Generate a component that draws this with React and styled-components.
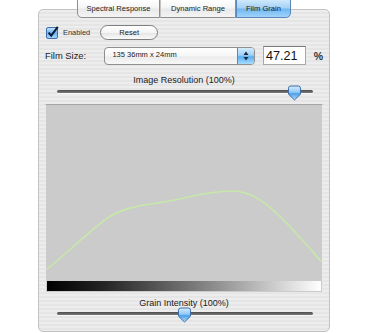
import React from "react";
import styled, { createGlobalStyle } from "styled-components";

const Global = createGlobalStyle`
  html, body { margin: 0; padding: 0; background: #ffffff; }
  body { font-family: "Liberation Sans", Arial, sans-serif; color: #1a1a1a; }
`;

const Page = styled.div`
  width: 370px;
  height: 333px;
  overflow: hidden;
  background: #ffffff;
  padding: 0 0 1px 38px;
  box-sizing: border-box;
  display: flex;
  flex-direction: column;
`;

const Window = styled.div`
  width: 292px;
  display: flex;
  flex-direction: column;
  flex: 1;
`;

const TabBar = styled.div`
  display: flex;
  justify-content: center;
  margin-top: -1px;
  margin-bottom: -9px;
  position: relative;
  z-index: 1;
`;

const Tab = styled.div`
  width: ${(p) => p.$w}px;
  height: 19px;
  box-sizing: border-box;
  display: flex;
  align-items: center;
  justify-content: center;
  font-size: 7.6px;
  color: #222;
  border: 1px solid #8e8e8e;
  border-left: ${(p) => (p.$first ? "1px solid #8e8e8e" : "1px solid #c4c4c4")};
  border-radius: ${(p) =>
    p.$first ? "0 0 0 5px" : p.$last ? "0 0 5px 0" : "0"};
  background: ${(p) =>
    p.$active
      ? "linear-gradient(#cfe8fb 0%, #a6d2f6 45%, #72b8f2 55%, #9fd3fb 100%)"
      : "linear-gradient(#ffffff 0%, #f5f5f5 45%, #e9e9e9 55%, #f4f4f4 100%)"};
  ${(p) => (p.$active ? "border-color: #5a86b8;" : "")}
`;

const Panel = styled.div`
  flex: 1;
  border: 1px solid #c2c2c2;
  border-radius: 5px;
  background: repeating-linear-gradient(
    to bottom,
    #ededed 0px,
    #ededed 2px,
    #e5e5e5 2px,
    #e5e5e5 4px
  );
  padding: 15px 6px 0 6px;
  display: flex;
  flex-direction: column;
`;

const Row = styled.div`
  display: flex;
  align-items: center;
  height: ${(p) => p.$h}px;
  margin-top: ${(p) => p.$mt || 0}px;
`;

const CheckWrap = styled.div`
  display: flex;
  align-items: center;
  gap: 4px;
  margin-left: 1px;
  font-size: 7.4px;
  color: #333;
`;

const ResetButton = styled.div`
  margin-left: 10px;
  width: 58px;
  height: 15px;
  box-sizing: border-box;
  border: 1px solid #7e7e7e;
  border-radius: 8px;
  background: linear-gradient(#ffffff 0%, #f4f4f4 50%, #e6e6e6 55%, #fafafa 100%);
  display: flex;
  align-items: center;
  justify-content: center;
  font-size: 7.6px;
  color: #222;
`;

const FieldLabel = styled.div`
  width: 60px;
  font-size: 9.4px;
  color: #222;
`;

const Select = styled.div`
  width: 152px;
  height: 18px;
  box-sizing: border-box;
  border: 1px solid #8f8f8f;
  border-radius: 4px;
  background: linear-gradient(#ffffff 0%, #f6f6f6 50%, #ebebeb 55%, #f8f8f8 100%);
  display: flex;
  align-items: stretch;
  overflow: hidden;
`;

const SelectText = styled.div`
  flex: 1;
  font-size: 7.5px;
  padding-left: 7px;
  padding-top: 2px;
  color: #222;
`;

const Stepper = styled.div`
  width: 16px;
  background: linear-gradient(#d4ecfd 0%, #9fd0f7 45%, #5aaef0 55%, #a8dcfd 100%);
  border-left: 1px solid #5a86b8;
  display: flex;
  align-items: center;
  justify-content: center;
`;

const NumberField = styled.div`
  margin-left: 8px;
  width: 43px;
  height: 19px;
  box-sizing: border-box;
  background: #fff;
  border: 1px solid #a8a8a8;
  border-top-color: #7a7a7a;
  font-size: 12.6px;
  padding-left: 2px;
  display: flex;
  align-items: center;
  color: #111;
`;

const Unit = styled.div`
  margin-left: 8px;
  font-size: 10.5px;
  font-weight: bold;
  color: #333;
`;

const Caption = styled.div`
  text-align: center;
  font-size: 9px;
  color: #1a1a1a;
  line-height: 11px;
  margin-top: ${(p) => p.$mt}px;
`;

const SliderBox = styled.div`
  position: relative;
  height: 16px;
  margin: ${(p) => p.$mt}px 10px 0 12px;
`;

const Track = styled.div`
  position: absolute;
  left: 0;
  right: 0;
  top: 4px;
  height: 3px;
  border-radius: 2px;
  background: linear-gradient(#4d4d4d, #7a7a7a);
  box-shadow: 0 1px 0 #f8f8f8;
`;

const ThumbPos = styled.div`
  position: absolute;
  top: -1px;
  width: 15px;
  height: 16px;
  transform: translateX(-7px);
`;

const Graph = styled.div`
  margin-top: 2px;
  height: 189px;
  box-sizing: border-box;
  border: 1px solid #e9e9e9;
  border-top: 1px solid #a5a5a5;
  background: #cbcbcb;
  display: flex;
  flex-direction: column;
  padding: 0 1px 1px 1px;
`;

const Plot = styled.svg`
  flex: 1;
  width: 100%;
  display: block;
`;

const Ramp = styled.div`
  height: 10px;
  background: linear-gradient(to right, #000 0%, #222 20%, #555 40%, #8a8a8a 60%, #c4c4c4 80%, #ffffff 100%);
`;

function Thumb() {
  return (
    <svg width="15" height="16" viewBox="0 0 15 16">
      <defs>
        <linearGradient id="tg" x1="0" y1="0" x2="0" y2="1">
          <stop offset="0" stopColor="#d8efff" />
          <stop offset="0.45" stopColor="#8ec8f6" />
          <stop offset="0.55" stopColor="#4d9fe8" />
          <stop offset="1" stopColor="#b6e0ff" />
        </linearGradient>
      </defs>
      <path
        d="M1.5 3.2 Q1.5 1 3.7 1 H11.3 Q13.5 1 13.5 3.2 V9.2 L7.5 15 L1.5 9.2 Z"
        fill="url(#tg)"
        stroke="#3c6da6"
        strokeWidth="1"
      />
    </svg>
  );
}

function Slider({ value, mt }) {
  return (
    <SliderBox $mt={mt}>
      <Track />
      <ThumbPos style={{ left: `${value}%` }}>
        <Thumb />
      </ThumbPos>
    </SliderBox>
  );
}

export default function App() {
  return (
    <>
      <Global />
      <Page>
        <Window>
          <TabBar>
            <Tab $w={83} $first>Spectral Response</Tab>
            <Tab $w={76}>Dynamic Range</Tab>
            <Tab $w={55} $last $active>Film Grain</Tab>
          </TabBar>
          <Panel>
            <Row $h={15}>
              <CheckWrap>
                <svg width="13" height="13" viewBox="0 0 13 13">
                  <defs>
                    <linearGradient id="cg" x1="0" y1="0" x2="0" y2="1">
                      <stop offset="0" stopColor="#cbe7fd" />
                      <stop offset="0.5" stopColor="#69b4f1" />
                      <stop offset="1" stopColor="#a9dafd" />
                    </linearGradient>
                  </defs>
                  <rect x="0.5" y="1.5" width="11" height="11" rx="1.5" fill="url(#cg)" stroke="#3f6fa8" />
                  <path d="M2.6 6.6 L5.2 9.6 L11.8 0.8" fill="none" stroke="#0d1a33" strokeWidth="2" />
                </svg>
                Enabled
              </CheckWrap>
              <ResetButton>Reset</ResetButton>
            </Row>
            <Row $h={19} $mt={6}>
              <FieldLabel>Film Size:</FieldLabel>
              <Select>
                <SelectText>135 36mm x 24mm</SelectText>
                <Stepper>
                  <svg width="6" height="10" viewBox="0 0 6 10">
                    <path d="M3 0.5 L5.5 4 H0.5 Z M3 9.5 L5.5 6 H0.5 Z" fill="#1d2c44" />
                  </svg>
                </Stepper>
              </Select>
              <NumberField>47.21</NumberField>
              <Unit>%</Unit>
            </Row>
            <Caption $mt={10}>Image Resolution (100%)</Caption>
            <Slider value={92.5} mt={0} />
            <Graph>
              <Plot viewBox="0 0 276 178" preserveAspectRatio="none">
                <path
                  d="M0 166 C20 150 40 130 60 115 C76 104 92 102 112 99 C140 95 160 87 186 87 C206 87 221 99 236 114 C251 129 263 143 276 158"
                  fill="none"
                  stroke="#c6e8a8"
                  strokeWidth="1.6"
                />
              </Plot>
              <Ramp />
            </Graph>
            <Caption $mt={5}>Grain Intensity (100%)</Caption>
            <Slider value={49.5} mt={-1} />
          </Panel>
        </Window>
      </Page>
    </>
  );
}
